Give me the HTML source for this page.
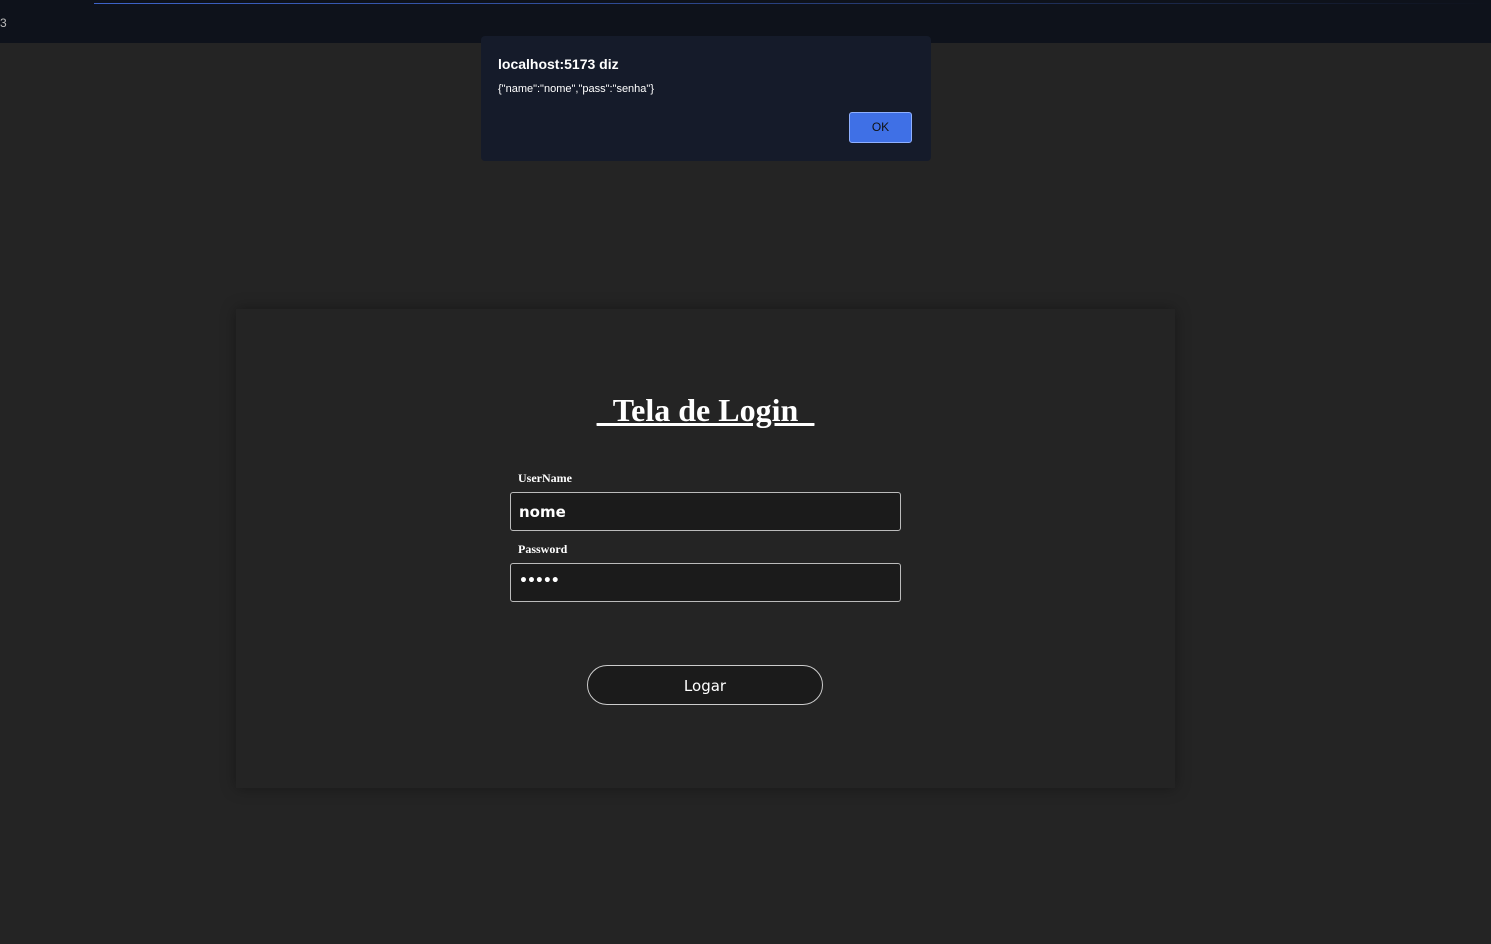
<!DOCTYPE html>
<html><head><style>
body{margin:0;width:1491px;height:944px;background:#242424;position:relative;overflow:hidden;font-family:"Liberation Sans",sans-serif;color:#fff}
.top{position:absolute;left:0;top:0;width:1491px;height:43px;background:#0e121b}
.line{position:absolute;left:94px;top:3px;width:1397px;height:1px;background:linear-gradient(90deg,#3d63c9,#2d4890 40%,#0e121b)}
.card{position:absolute;left:236px;top:309px;width:939px;height:479px;background:#242424;box-shadow:0 0 14px rgba(0,0,0,.35)}
.dlg{position:absolute;left:481px;top:36px;width:450px;height:125px;background:#151b2a;border-radius:4px}
h1{position:absolute;left:236px;width:939px;top:390px;margin:0;text-align:center;font:bold 32px "Liberation Serif",serif;text-decoration:underline;line-height:40px}
.lbl{position:absolute;left:518px;font:bold 12px "Liberation Serif",serif}
.inp{position:absolute;left:510px;width:389px;height:37px;border:1px solid #bbb;border-radius:3px;background:#1b1b1b;box-sizing:content-box}
.inp span{position:absolute;left:8px;top:10px;font-size:15px;font-weight:bold;font-family:"DejaVu Sans",sans-serif}
.btn{position:absolute;left:587px;top:665px;width:234px;height:38px;border:1px solid #ccc;border-radius:20px;background:#1b1b1b;text-align:center;line-height:40px;font-size:15px;font-family:"DejaVu Sans",sans-serif}
</style></head><body>
<div class="top"><div class="line"></div><div style="position:absolute;left:0;top:16px;font-size:12px;color:#bbb">3</div></div>
<div class="card"></div>
<h1>_Tela de Login_</h1>
<div class="lbl" style="top:471px">UserName</div>
<div class="inp" style="top:492px"><span>nome</span></div>
<div class="lbl" style="top:542px">Password</div>
<div class="inp" style="top:563px"><span style="top:9px;font-size:14px;letter-spacing:-1px">•••••</span></div>
<div class="btn">Logar</div>
<div class="dlg">
<div style="position:absolute;left:17px;top:20px;font-size:14px;font-weight:bold">localhost:5173 diz</div>
<div style="position:absolute;left:17px;top:47px;font-size:11px">{"name":"nome","pass":"senha"}</div>
<div style="position:absolute;left:368px;top:76px;width:63px;height:31px;background:#3f70e6;border:1px solid #8fb0ff;border-radius:3px;box-sizing:border-box;text-align:center;line-height:29px;font-size:12px;color:#111">OK</div>
</div>
</body></html>
